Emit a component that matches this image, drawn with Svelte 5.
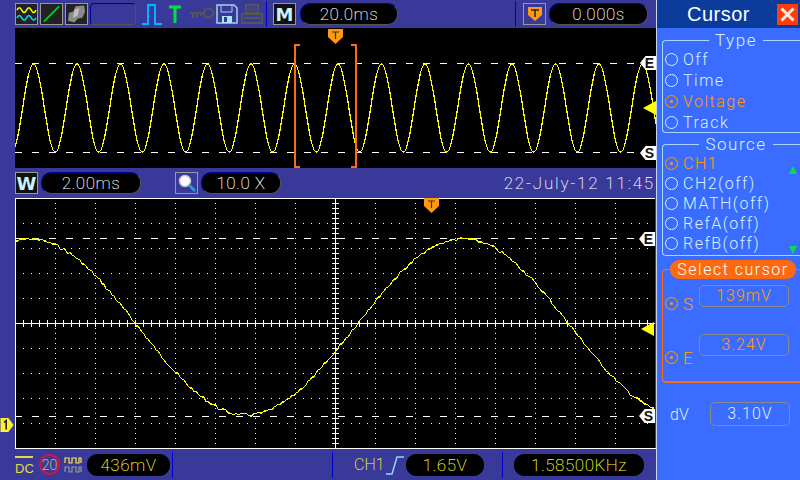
<script>
  // upper trace: plain sine, peaks every 43.5px
  function upperTrace() {
    const pts = [];
    for (let x = 0; x <= 641; x++) {
      const y = 80 - 44 * Math.cos(((x - 279.5) / 43.5) * 2 * Math.PI);
      pts.push(x + "," + Math.round(y));
    }
    return pts.join(" ");
  }

  // lower trace: slow sine with a little noise
  function lowerTrace() {
    const pts = [];
    let seed = 7;
    for (let x = 1; x <= 640; x += 2) {
      seed = (seed * 9301 + 49297) % 233280;
      const noise = (seed / 233280 - 0.5) * 3.2;
      const y = 129 - 88 * Math.cos(((x - 448) / 433) * 2 * Math.PI) + noise;
      pts.push(x + "," + Math.round(y));
    }
    return pts.join(" ");
  }

  const range = (from, to, step) => {
    const out = [];
    for (let v = from; v <= to; v += step) out.push(v);
    return out;
  };

  const gridX = range(40, 640, 40).filter((x) => x !== 320);
  const gridY = range(25, 225, 25).filter((y) => y !== 125);
  const dotX = range(8, 636, 8);
  const dotY = range(5, 248, 5);

  const types = [
    { label: "Off" },
    { label: "Time" },
    { label: "Voltage", on: true },
    { label: "Track" },
  ];
  const sources = [
    { label: "CH1", on: true },
    { label: "CH2(off)" },
    { label: "MATH(off)" },
    { label: "RefA(off)" },
    { label: "RefB(off)" },
  ];
</script>

<div class="scope">
  <div class="main">
    <div class="bar top">
      <span class="tile">
        <svg width="22" height="20" viewBox="0 0 22 20">
          <path d="M1 6q2.500-5 5 0t5 0 5 0 5 0" fill="none" stroke="#ffff00" stroke-width="1.500" />
          <path d="M1 14q2.500-5 5 0t5 0 5 0 5 0" fill="none" stroke="#00e5ff" stroke-width="1.500" />
        </svg>
      </span>
      <span class="tile">
        <svg width="22" height="20" viewBox="0 0 22 20">
          <path d="M3 18L19 2" stroke="#00d020" stroke-width="2" />
        </svg>
      </span>
      <span class="tile">
        <svg width="22" height="20" viewBox="0 0 22 20">
          <path d="M2 17L3 9 8 7 10 2 19 1 20 8 17 14 12 15 9 19Z" fill="#8a8a8a" />
          <path d="M9 5L14 4 12 12 7 14Z" fill="#c0c0c0" />
        </svg>
      </span>
      <span class="empty-slot"></span>
      <svg class="tool pulse" width="22" height="22" viewBox="0 0 22 22">
        <path d="M1 21H7V2H14V21H21" fill="none" stroke="#00b4ff" stroke-width="2" />
      </svg>
      <svg class="tool tee" width="16" height="20" viewBox="0 0 16 20">
        <path d="M2 3H14M8 3V19" fill="none" stroke="#00e040" stroke-width="3" />
      </svg>
      <svg class="tool key" width="24" height="14" viewBox="0 0 24 14">
        <circle cx="18.500" cy="6" r="4.500" fill="none" stroke="#555" stroke-width="2" />
        <path d="M0 6H14M3 6V11M7 6V11M11 6V9" fill="none" stroke="#555" stroke-width="2" />
      </svg>
      <svg class="tool floppy" width="22" height="20" viewBox="0 0 22 20">
        <path d="M1 1H18L21 4V19H1Z" fill="#39399a" stroke="#a8d0e8" stroke-width="1.500" />
        <path d="M5 1V8H16V1" fill="none" stroke="#a8d0e8" />
        <rect x="6" y="12" width="10" height="7" fill="#a8e8f4" />
        <rect x="8" y="13" width="3" height="5" fill="#39399a" />
      </svg>
      <svg class="tool printer" width="22" height="20" viewBox="0 0 22 20">
        <path d="M5 1H17V9H5Z" fill="none" stroke="#555" stroke-width="2" />
        <path d="M7 4H15M7 6H15" stroke="#555" />
        <path d="M1 10H21V19H1Z" fill="none" stroke="#555" stroke-width="2" />
        <path d="M3 14H19" stroke="#555" stroke-width="2" />
      </svg>
      <span class="divider first"></span>
      <span class="tile letter">M</span>
      <span class="pill time">20.0ms</span>
      <span class="divider second"></span>
      <span class="tile trig">
        <svg width="16" height="16" viewBox="0 0 16 16">
          <path d="M1 1H15V9L8 15 1 9Z" fill="#ff9a10" />
          <path d="M4 4H12M8 4V11" fill="none" stroke="#222" stroke-width="1.500" />
        </svg>
      </span>
      <span class="pill offset">0.000s</span>
    </div>

    <div class="screen upper">
      <svg class="plot" width="641" height="140" viewBox="0 0 641 140">
        <line x1="0" x2="641" y1="35.500" y2="35.500" class="dash" />
        <line x1="0" x2="641" y1="124.500" y2="124.500" class="dash" />
        <polyline class="trace" points={upperTrace()} />
        <path d="M285 17H280V139H285M336 17H341V139H336" fill="none" stroke="#ff6a10" stroke-width="2" shape-rendering="crispEdges" />
      </svg>
      <svg class="mark t-up" width="15" height="15" viewBox="0 0 15 15">
        <path d="M0 0H15V8L7.500 15 0 8Z" fill="#ff9a10" />
        <path d="M4 3H11M7.500 3V10" fill="none" stroke="#333" stroke-width="1.200" />
      </svg>
      <span class="flag e-up">E</span>
      <span class="flag s-up">S</span>
      <svg class="mark level-up" width="13" height="14" viewBox="0 0 13 14"><path d="M13 0V14L0 7Z" fill="#ffff00" /></svg>
    </div>

    <div class="bar mid">
      <span class="tile letter">W</span>
      <span class="pill window">2.00ms</span>
      <span class="tile lens">
        <svg width="20" height="20" viewBox="0 0 20 20">
          <circle cx="8" cy="8" r="5.500" fill="#fff" stroke="#c8c8c8" stroke-width="1.500" />
          <path d="M12 12L18 18" stroke="#18a8d0" stroke-width="2.500" />
        </svg>
      </span>
      <span class="pill zoom">10.0 X</span>
      <span class="date">22-July-12 11:45</span>
    </div>

    <div class="screen lower">
      <svg class="plot" width="640" height="250" viewBox="0 0 640 250">
        {#each gridX as x}
          {#each dotY as y}
            <rect x={x} y={y} width="1" height="1" fill="#fff" />
          {/each}
        {/each}
        {#each gridY as y}
          {#each dotX as x}
            <rect x={x} y={y} width="1" height="1" fill="#fff" />
          {/each}
        {/each}
        <line x1="0" x2="640" y1="0.500" y2="0.500" class="axis" />
        <line x1="0.500" x2="0.500" y1="0" y2="250" class="axis" />
        <line x1="0" x2="640" y1="40.500" y2="40.500" class="dash" />
        <line x1="0" x2="640" y1="218.500" y2="218.500" class="dash" />
        <line x1="0" x2="640" y1="125.500" y2="125.500" class="axis" />
        <line x1="320.500" x2="320.500" y1="0" y2="250" class="axis" />
        {#each dotX as x}
          <line x1={x + 0.5} x2={x + 0.5} y1="122" y2="129" class="axis" />
        {/each}
        {#each dotY as y}
          <line x1="317" x2="324" y1={y + 0.5} y2={y + 0.5} class="axis" />
        {/each}
        <polyline class="trace" points={lowerTrace()} />
      </svg>
      <svg class="mark t-low" width="15" height="15" viewBox="0 0 15 15">
        <path d="M0 0H15V8L7.500 15 0 8Z" fill="#ff9a10" />
        <path d="M4 3H11M7.500 3V10" fill="none" stroke="#333" stroke-width="1.200" />
      </svg>
      <span class="flag e-low">E</span>
      <span class="flag s-low">S</span>
      <svg class="mark level-low" width="13" height="14" viewBox="0 0 13 14"><path d="M13 0V14L0 7Z" fill="#ffff00" /></svg>
    </div>

    <div class="bar bottom">
      <span class="coupling">DC</span>
      <span class="bw">20</span>
      <svg class="squares" width="18" height="18" viewBox="0 0 18 18">
        <path d="M1 7V2H5V7H8V2H12V7H15V2H17V7" fill="none" stroke="#ffe840" stroke-width="1.200" />
        <path d="M1 16V11H5V16H8V11H12V16H15V11H17V16" fill="none" stroke="#999" stroke-width="1.200" />
      </svg>
      <span class="pill yellow volts">436mV</span>
      <span class="divider third"></span>
      <span class="divider fourth"></span>
      <span class="src">CH1</span>
      <svg class="edge" width="20" height="20" viewBox="0 0 20 20">
        <path d="M1 19H7L12 2H19" fill="none" stroke="#90d8ff" stroke-width="1.500" />
      </svg>
      <span class="pill yellow level">1.65V</span>
      <span class="divider fifth"></span>
      <span class="pill yellow freq">1.58500KHz</span>
    </div>

    <svg class="mark chan" width="15" height="14" viewBox="0 0 16 16">
      <path d="M0 0H9L15 8 9 16H0Z" fill="#ffef30" />
      <path d="M4 5L6.500 3V13" fill="none" stroke="#222" stroke-width="1.800" />
    </svg>
  </div>

  <div class="panel">
    <div class="head">
      <span class="title">Cursor</span>
      <svg class="close" width="21" height="21" viewBox="0 0 21 21">
        <rect width="21" height="21" fill="#ff3c10" />
        <path d="M4.500 4.500L16.500 16.500M16.500 4.500L4.500 16.500" stroke="#ffe8d8" stroke-width="3" />
      </svg>
    </div>

    <fieldset class="group type">
      <legend>Type</legend>
      {#each types as t}
        <div class="opt" class:on={t.on}><span class="radio"></span>{t.label}</div>
      {/each}
    </fieldset>

    <fieldset class="group source">
      <legend>Source</legend>
      {#each sources as s}
        <div class="opt" class:on={s.on}><span class="radio"></span>{s.label}</div>
      {/each}
      <span class="arrow up"></span>
      <span class="arrow down"></span>
    </fieldset>

    <div class="select">
      <div class="select-title">Select cursor</div>
      <div class="cursor-row s">
        <div class="opt on"><span class="radio"></span>S</div>
        <span class="value">139mV</span>
      </div>
      <div class="cursor-row e">
        <div class="opt on"><span class="radio"></span>E</div>
        <span class="value">3.24V</span>
      </div>
    </div>

    <div class="delta">
      <span>dV</span>
      <span class="value light">3.10V</span>
    </div>
  </div>
</div>

<style>
  :global(body) {
    margin: 0;
    background: #39399a;
  }

  .scope {
    display: flex;
    width: 800px;
    height: 480px;
    overflow: hidden;
    background: #39399a;
    color: #fff;
    font-family: Roboto, "Liberation Sans", sans-serif;
    font-weight: 200;
  }

  .main {
    position: relative;
    display: flex;
    flex-direction: column;
    width: 656px;
    flex: none;
  }

  .bar {
    display: flex;
    align-items: center;
    flex: none;
    padding-left: 15px;
  }

  .top {
    height: 28px;
  }

  .mid {
    height: 30px;
  }

  .bottom {
    height: 32px;
    border-top: 1px solid #fff;
    box-sizing: border-box;
    margin-left: 15px;
    padding-left: 0;
  }

  .tile {
    display: flex;
    align-items: center;
    justify-content: center;
    box-sizing: border-box;
    width: 23px;
    height: 22px;
    margin-right: 2px;
    background: #222;
    border: 1px solid #999;
    flex: none;
  }

  .letter {
    font-family: "DejaVu Sans", sans-serif;
    font-size: 18px;
    font-weight: 700;
    color: #c8f4ff;
    background: #111;
  }

  .empty-slot {
    box-sizing: border-box;
    width: 46px;
    height: 22px;
    border: 1px solid #555;
    border-top-color: #00008a;
    border-left-color: #00008a;
    border-radius: 4px;
  }

  .tool {
    flex: none;
  }

  .pulse {
    margin-left: 5px;
  }

  .tee {
    margin-left: 4px;
  }

  .key {
    margin-left: 7px;
  }

  .floppy {
    margin-left: 2px;
  }

  .printer {
    margin-left: 3px;
  }

  .divider {
    width: 1px;
    flex: none;
    align-self: center;
    height: 26px;
    background: #0000c8;
  }

  .first {
    margin: 0 6px 0 3px;
  }

  .second {
    margin: 0 7px 0 0;
  }

  .pill {
    display: flex;
    align-items: center;
    justify-content: center;
    box-sizing: border-box;
    height: 22px;
    flex: none;
    background: #000;
    border: 1px solid;
    border-color: #00009a #555 #555 #00009a;
    border-radius: 10px;
    font-size: 17px;
    letter-spacing: 0.5px;
  }

  .time {
    width: 98px;
    margin: 0 117px 0 2px;
  }

  .offset {
    width: 99px;
    margin-left: 1px;
  }

  .trig {
    background: transparent;
  }

  .window {
    width: 100px;
    margin-left: 1px;
  }

  .lens {
    background: transparent;
    margin-left: 34px;
  }

  .zoom {
    width: 80px;
    margin-left: 1px;
  }

  .date {
    margin-left: auto;
    margin-right: 1px;
    font-size: 17px;
    letter-spacing: 1.800px;
    white-space: nowrap;
  }

  .screen {
    position: relative;
    margin-left: 15px;
    background: #000;
    flex: none;
  }

  .upper {
    width: 641px;
    height: 140px;
  }

  .lower {
    width: 640px;
    height: 250px;
  }

  .plot {
    display: block;
  }

  .dash {
    stroke: #fff;
    stroke-dasharray: 7 10;
    stroke-width: 1;
    shape-rendering: crispEdges;
  }

  .axis {
    stroke: #fff;
    stroke-width: 1;
    shape-rendering: crispEdges;
  }

  .trace {
    fill: none;
    stroke: #ffff00;
    stroke-width: 1.200;
    stroke-linejoin: round;
    shape-rendering: crispEdges;
  }

  .mark {
    position: absolute;
  }

  .t-up {
    top: 1px;
    left: 313px;
  }

  .t-low {
    top: 0;
    left: 409px;
  }

  .level-up {
    top: 73px;
    right: 0;
  }

  .level-low {
    top: 124px;
    right: 1px;
  }

  .chan {
    left: 0;
    top: 418px;
  }

  .flag {
    position: absolute;
    box-sizing: border-box;
    width: 16px;
    height: 14px;
    right: 0;
    background: #fff;
    color: #111;
    font-family: "Liberation Sans", sans-serif;
    font-size: 14px;
    font-weight: 700;
    line-height: 14px;
    text-align: right;
    padding-right: 2px;
    clip-path: polygon(35% 0, 100% 0, 100% 100%, 35% 100%, 0 50%);
  }

  .e-up {
    top: 28px;
  }

  .s-up {
    top: 118px;
  }

  .e-low {
    top: 34px;
  }

  .s-low {
    top: 211px;
  }

  .coupling {
    width: 18px;
    margin-top: 1px;
    border-top: 2px solid #e8d848;
    color: #e8d848;
    font-family: "Liberation Sans", sans-serif;
    font-size: 13px;
    font-weight: 400;
    text-align: center;
    line-height: 13px;
    padding-top: 4px;
    box-sizing: border-box;
  }

  .bw {
    display: flex;
    align-items: center;
    justify-content: center;
    box-sizing: border-box;
    width: 21px;
    height: 21px;
    margin-left: 6px;
    border: 2px solid #e01030;
    border-radius: 50%;
    color: #ffe840;
    font-size: 14px;
  }

  .squares {
    margin-left: 4px;
  }

  .yellow {
    color: #ffff20;
  }

  .volts {
    width: 83px;
    margin-left: 5px;
    border-color: #000;
  }

  .third {
    margin-left: 2px;
  }

  .fourth {
    margin-left: 159px;
  }

  .src {
    width: 28px;
    margin-left: 21px;
    color: #ffff20;
    font-size: 16px;
  }

  .edge {
    margin-left: 3px;
    flex: none;
  }

  .level {
    width: 78px;
    margin-left: 1px;
    border-color: #000;
  }

  .fifth {
    margin-left: 18px;
  }

  .freq {
    width: 130px;
    margin-left: 11px;
    border-color: #000;
  }

  .panel {
    position: relative;
    box-sizing: border-box;
    width: 144px;
    height: 480px;
    flex: none;
    background: #3a6cff;
    border-left: 1px solid #ccd4e8;
    font-weight: 300;
  }

  .head {
    position: relative;
    height: 28px;
    background: #0b3c9c;
    display: flex;
    align-items: center;
  }

  .title {
    margin-left: 30px;
    font-family: "Liberation Sans", sans-serif;
    font-size: 20px;
    font-weight: 400;
    letter-spacing: 0.5px;
  }

  .close {
    position: absolute;
    right: 2px;
    top: 4px;
  }

  .group {
    position: relative;
    box-sizing: border-box;
    margin: 0 0 0 5px;
    padding: 0 0 0 2px;
    width: 145px;
    border: 1px solid #a8d8ff;
    border-right: none;
    border-radius: 4px 0 0 4px;
    color: #d8f2ff;
  }

  legend {
    margin: 0 auto;
    padding: 0 6px;
    font-size: 17px;
    letter-spacing: 1.500px;
    line-height: 20px;
  }

  .type {
    height: 103px;
    margin-top: 2px;
  }

  .type legend {
    margin-bottom: -1px;
  }

  .source {
    height: 122px;
    margin-top: 1px;
  }

  .source legend {
    margin-bottom: -1px;
  }

  .opt {
    display: flex;
    align-items: center;
    height: 21px;
    font-size: 16px;
    letter-spacing: 1.500px;
    white-space: nowrap;
  }

  .source .opt {
    height: 20px;
  }

  .opt.on {
    color: #ff9a10;
  }

  .radio {
    position: relative;
    box-sizing: border-box;
    width: 13px;
    height: 13px;
    margin-right: 5px;
    border: 1px solid currentColor;
    border-radius: 50%;
    flex: none;
  }

  .on .radio::after {
    content: "";
    position: absolute;
    left: 4px;
    top: 4px;
    width: 3px;
    height: 3px;
    border-radius: 50%;
    background: currentColor;
  }

  .arrow {
    position: absolute;
    right: 10px;
    width: 0;
    height: 0;
    border-left: 4px solid transparent;
    border-right: 4px solid transparent;
  }

  .up {
    top: 13px;
    border-bottom: 8px solid #00e050;
  }

  .down {
    top: 93px;
    border-top: 8px solid #00e050;
  }

  .select {
    position: relative;
    box-sizing: border-box;
    margin: 13px 0 0 5px;
    height: 114px;
    border: 1px solid #ff6a10;
    border-right: none;
    border-bottom-width: 2px;
    border-radius: 4px 0 0 4px;
    color: #ff9a10;
  }

  .select-title {
    position: absolute;
    left: 7px;
    top: -10px;
    width: 126px;
    height: 19px;
    border-radius: 9px;
    background: #ff6a10;
    color: #fff;
    font-size: 16px;
    letter-spacing: 1.500px;
    line-height: 19px;
    text-align: center;
    white-space: nowrap;
  }

  .cursor-row {
    position: absolute;
    left: 2px;
    right: 0;
  }

  .cursor-row.s {
    top: 15px;
  }

  .cursor-row.e {
    top: 64px;
  }

  .cursor-row.s .opt {
    margin-top: 8px;
    font-size: 17px;
  }

  .cursor-row.e .opt {
    margin-top: 13px;
    font-size: 17px;
  }

  .value {
    position: absolute;
    left: 34px;
    top: 0;
    box-sizing: border-box;
    width: 90px;
    height: 22px;
    border: 1px solid #8a8a8a;
    border-radius: 5px;
    font-size: 16px;
    letter-spacing: 1px;
    line-height: 20px;
    text-align: center;
  }

  .delta {
    position: relative;
    display: flex;
    align-items: center;
    height: 24px;
    margin-top: 19px;
    padding-left: 13px;
    color: #d8f2ff;
    font-size: 16px;
  }

  .light {
    left: 53px;
    width: 80px;
    height: 24px;
    line-height: 22px;
  }
</style>
